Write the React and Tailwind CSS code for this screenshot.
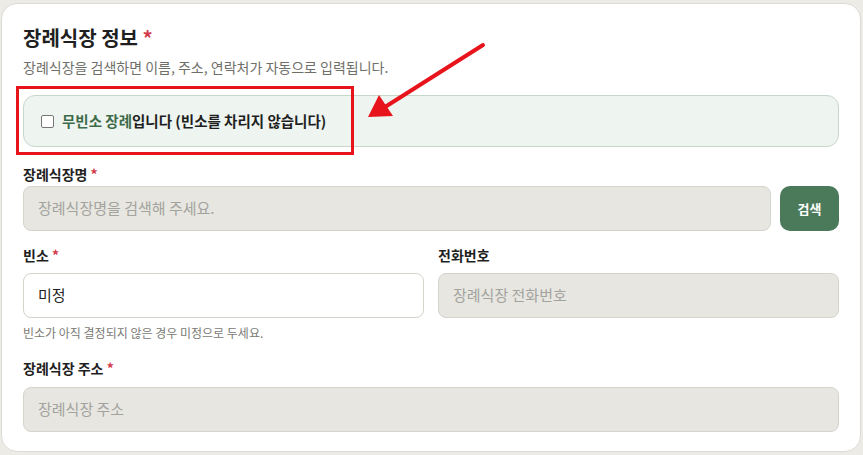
export default function App() {
  const font = { fontFamily: '"Noto Sans CJK KR", "Noto Sans", sans-serif' };
  return (
    <div className="w-[863px] h-[455px] bg-[#ecebe6] pt-[3px] pl-[1px] pr-[2px] relative overflow-hidden" style={font}>
      <div className="bg-white rounded-[16px] border border-[#dcdbd5] h-[449px] px-[21px] pt-[20px]">
        <h2 className="text-[20px] font-bold text-[#1f1f1f] leading-[28px]">
          장례식장 정보 <span className="text-[#d33a4a]">*</span>
        </h2>
        <p className="text-[14px] text-[#6f6f6a] mt-[5px] leading-[20px]">
          장례식장을 검색하면 이름, 주소, 연락처가 자동으로 입력됩니다.
        </p>
        <div className="relative mt-[18px]">
          <div className="h-[52px] rounded-[12px] bg-[#eef4ef] border border-[#c9d6cc] flex items-center pl-[17px] gap-[8px]">
            <span className="w-[13px] h-[13px] border border-[#767676] rounded-[2px] bg-white" />
            <span className="text-[14.5px] font-bold text-[#1f1f1f]">
              <span className="text-[#3d6b4a]">무빈소 장례</span>입니다 (빈소를 차리지 않습니다)
            </span>
          </div>
          <div className="absolute left-[-7px] top-[-9px] w-[338px] h-[69px] border-[3px] border-[#e8141b]" />
        </div>
        <div className="mt-[17px]">
          <label className="block text-[14px] font-bold text-[#1f1f1f] leading-[20px]">
            장례식장명 <span className="text-[#d33a4a]">*</span>
          </label>
          <div className="flex gap-[9px] mt-[2px]">
            <div className="flex-1 h-[45px] rounded-[8px] bg-[#e7e6e1] border border-[#d4d3cc] flex items-center px-[14px] text-[15px] text-[#a3a39e]">
              장례식장명을 검색해 주세요.
            </div>
            <button className="w-[59px] h-[45px] rounded-[10px] bg-[#4b7a5a] text-white text-[13px] font-bold">
              검색
            </button>
          </div>
        </div>
        <div className="grid grid-cols-2 gap-x-[14px] mt-[14px]">
          <div>
            <label className="block text-[14px] font-bold text-[#1f1f1f] leading-[20px]">
              빈소 <span className="text-[#d33a4a]">*</span>
            </label>
            <div className="mt-[8px] h-[45px] rounded-[8px] bg-white border border-[#d4d3cc] flex items-center px-[14px] text-[15px] text-[#1f1f1f]">
              미정
            </div>
            <p className="text-[12px] text-[#7a7a75] mt-[6px] leading-[18px]">
              빈소가 아직 결정되지 않은 경우 미정으로 두세요.
            </p>
          </div>
          <div>
            <label className="block text-[14px] font-bold text-[#1f1f1f] leading-[20px]">
              전화번호
            </label>
            <div className="mt-[8px] h-[45px] rounded-[8px] bg-[#e7e6e1] border border-[#d4d3cc] flex items-center px-[14px] text-[15px] text-[#a3a39e]">
              장례식장 전화번호
            </div>
          </div>
        </div>
        <div className="mt-[16px]">
          <label className="block text-[14px] font-bold text-[#1f1f1f] leading-[20px]">
            장례식장 주소 <span className="text-[#d33a4a]">*</span>
          </label>
          <div className="mt-[9px] h-[45px] rounded-[8px] bg-[#e7e6e1] border border-[#d4d3cc] flex items-center px-[14px] text-[15px] text-[#a3a39e]">
            장례식장 주소
          </div>
        </div>
      </div>
      <svg className="absolute left-0 top-0 pointer-events-none" width="863" height="455">
        <line x1="483" y1="45" x2="385" y2="107" stroke="#e8141b" strokeWidth="4" strokeLinecap="round" />
        <polygon points="368,117 379,95 393,116" fill="#e8141b" />
      </svg>
    </div>
  );
}
